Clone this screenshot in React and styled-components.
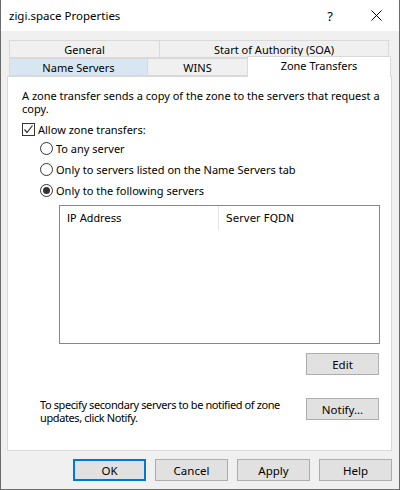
import React from "react";
import styled, { createGlobalStyle } from "styled-components";

const GlobalStyle = createGlobalStyle`
  html, body {
    margin: 0;
    padding: 0;
    background: #ffffff;
  }
  body {
    font-family: "Noto Sans", "Open Sans", sans-serif;
    font-size: 11px;
    color: #000;
  }
  * { box-sizing: border-box; }
`;

const Window = styled.div`
  width: 400px;
  height: 490px;
  display: flex;
  flex-direction: column;
  border: 1px solid #6b6b6b;
  border-top: none;
  background: #f0f0f0;
`;

const TitleBar = styled.div`
  height: 31px;
  background: #ffffff;
  display: flex;
  align-items: center;
  padding-left: 8px;
  font-size: 11.5px;
`;

const Title = styled.div`
  flex: 1;
`;

const TitleButton = styled.div`
  width: 46px;
  height: 31px;
  display: flex;
  align-items: center;
  justify-content: center;
  font-size: 13px;
`;

const Body = styled.div`
  flex: 1;
  display: flex;
  flex-direction: column;
  padding: 10px 7px 0 6px;
`;

const Tabs = styled.div`
  display: flex;
  flex-direction: column;
  padding: 0 1px 0 2px;
  position: relative;
  z-index: 1;
`;

const TabRow = styled.div`
  display: flex;
  align-items: flex-end;
  height: ${({ $h }) => $h}px;
`;

const Tab = styled.div`
  width: ${({ $w }) => $w}px;
  height: ${({ $active }) => ($active ? 21 : 18)}px;
  margin-bottom: ${({ $active }) => ($active ? -1 : 0)}px;
  display: flex;
  align-items: center;
  justify-content: center;
  padding-bottom: ${({ $active }) => ($active ? 4 : 0)}px;
  border: 1px solid #d9d9d9;
  border-bottom: ${({ $active }) => ($active ? "none" : "1px solid #d9d9d9")};
  margin-left: -1px;
  background: ${({ $active, $hover }) =>
    $active ? "#ffffff" : $hover ? "#d8e6f2" : "#f0f0f0"};
  &:first-child { margin-left: 0; }
`;

const Panel = styled.div`
  height: 375px;
  background: #ffffff;
  border: 1px solid #d9d9d9;
  display: flex;
  flex-direction: column;
  padding: 12px 10px 0 14px;
`;

const Intro = styled.p`
  margin: 0;
  line-height: 13px;
`;

const CheckRow = styled.label`
  display: flex;
  align-items: center;
  gap: 3px;
  height: 18px;
  margin-top: 5px;
`;

const Box = styled.span`
  width: 13px;
  height: 13px;
  border: 1px solid #333333;
  background: #fff;
  display: flex;
  align-items: center;
  justify-content: center;
`;

const Options = styled.div`
  display: flex;
  flex-direction: column;
  padding-left: 18px;
`;

const RadioRow = styled.label`
  display: flex;
  align-items: center;
  gap: 3px;
  height: 21px;
`;

const Radio = styled.span`
  width: 13px;
  height: 13px;
  border: 1px solid #333333;
  border-radius: 50%;
  display: flex;
  align-items: center;
  justify-content: center;
  &::after {
    content: "";
    width: 7px;
    height: 7px;
    border-radius: 50%;
    background: ${({ $checked }) => ($checked ? "#333333" : "transparent")};
  }
`;

const ListBox = styled.div`
  margin: 4px 1px 0 37px;
  height: 139px;
  border: 1px solid #828790;
  background: #fff;
`;

const ListHeader = styled.div`
  display: flex;
  height: 24px;
  font-family: "DejaVu Sans", "Liberation Sans", sans-serif;
  font-size: 10.5px;
`;

const Column = styled.div`
  width: ${({ $w }) => $w}px;
  display: flex;
  align-items: center;
  padding-left: 7px;
  border-right: ${({ $sep }) => ($sep ? "1px solid #e5e5e5" : "none")};
`;

const Button = styled.button`
  width: 73px;
  height: 22px;
  flex-shrink: 0;
  font-family: inherit;
  font-size: 11.5px;
  color: #000;
  background: #e1e1e1;
  border: ${({ $default }) => ($default ? "2px solid #0078d7" : "1px solid #adadad")};
  padding: 0;
  margin: 0;
`;

const RightRow = styled.div`
  display: flex;
  justify-content: flex-end;
  padding-right: 2px;
  margin-top: ${({ $mt }) => $mt}px;
`;

const NotifyRow = styled.div`
  display: flex;
  align-items: flex-start;
  justify-content: space-between;
  padding-left: 18px;
  padding-right: 2px;
  margin-top: 23px;
`;

const NotifyText = styled.p`
  margin: 0;
  width: 258px;
  line-height: 13px;
  letter-spacing: -0.4px;
`;

const Footer = styled.div`
  display: flex;
  justify-content: flex-end;
  gap: 9px;
  padding: 8px 0 0 0;
`;

const CloseIcon = () => (
  <svg width="11" height="11" viewBox="0 0 11 11">
    <path d="M0.5 0.5 L10.5 10.5 M10.5 0.5 L0.5 10.5" stroke="#000" strokeWidth="1" />
  </svg>
);

const CheckMark = () => (
  <svg width="11" height="11" viewBox="0 0 11 11">
    <path d="M1.5 5.5 L4 8.5 L9.5 1.5" fill="none" stroke="#333" strokeWidth="1.2" />
  </svg>
);

export default function App() {
  return (
    <>
      <GlobalStyle />
      <Window>
        <TitleBar>
          <Title>zigi.space Properties</Title>
          <TitleButton>?</TitleButton>
          <TitleButton>
            <CloseIcon />
          </TitleButton>
        </TitleBar>
        <Body>
          <Tabs>
            <TabRow $h={17}>
              <Tab $w={151}>General</Tab>
              <Tab $w={230}>Start of Authority (SOA)</Tab>
            </TabRow>
            <TabRow $h={18}>
              <Tab $w={139} $hover>Name Servers</Tab>
              <Tab $w={101}>WINS</Tab>
              <Tab $w={144} $active>Zone Transfers</Tab>
            </TabRow>
          </Tabs>
          <Panel>
            <Intro>
              A zone transfer sends a copy of the zone to the servers that request a copy.
            </Intro>
            <CheckRow>
              <Box>
                <CheckMark />
              </Box>
              Allow zone transfers:
            </CheckRow>
            <Options>
              <RadioRow>
                <Radio />
                To any server
              </RadioRow>
              <RadioRow>
                <Radio />
                Only to servers listed on the Name Servers tab
              </RadioRow>
              <RadioRow>
                <Radio $checked />
                Only to the following servers
              </RadioRow>
            </Options>
            <ListBox>
              <ListHeader>
                <Column $w={159} $sep>IP Address</Column>
                <Column $w={160}>Server FQDN</Column>
              </ListHeader>
            </ListBox>
            <RightRow $mt={9}>
              <Button>Edit</Button>
            </RightRow>
            <NotifyRow>
              <NotifyText>
                To specify secondary servers to be notified of zone updates, click Notify.
              </NotifyText>
              <Button>Notify...</Button>
            </NotifyRow>
          </Panel>
          <Footer>
            <Button $default>OK</Button>
            <Button>Cancel</Button>
            <Button>Apply</Button>
            <Button>Help</Button>
          </Footer>
        </Body>
      </Window>
    </>
  );
}
